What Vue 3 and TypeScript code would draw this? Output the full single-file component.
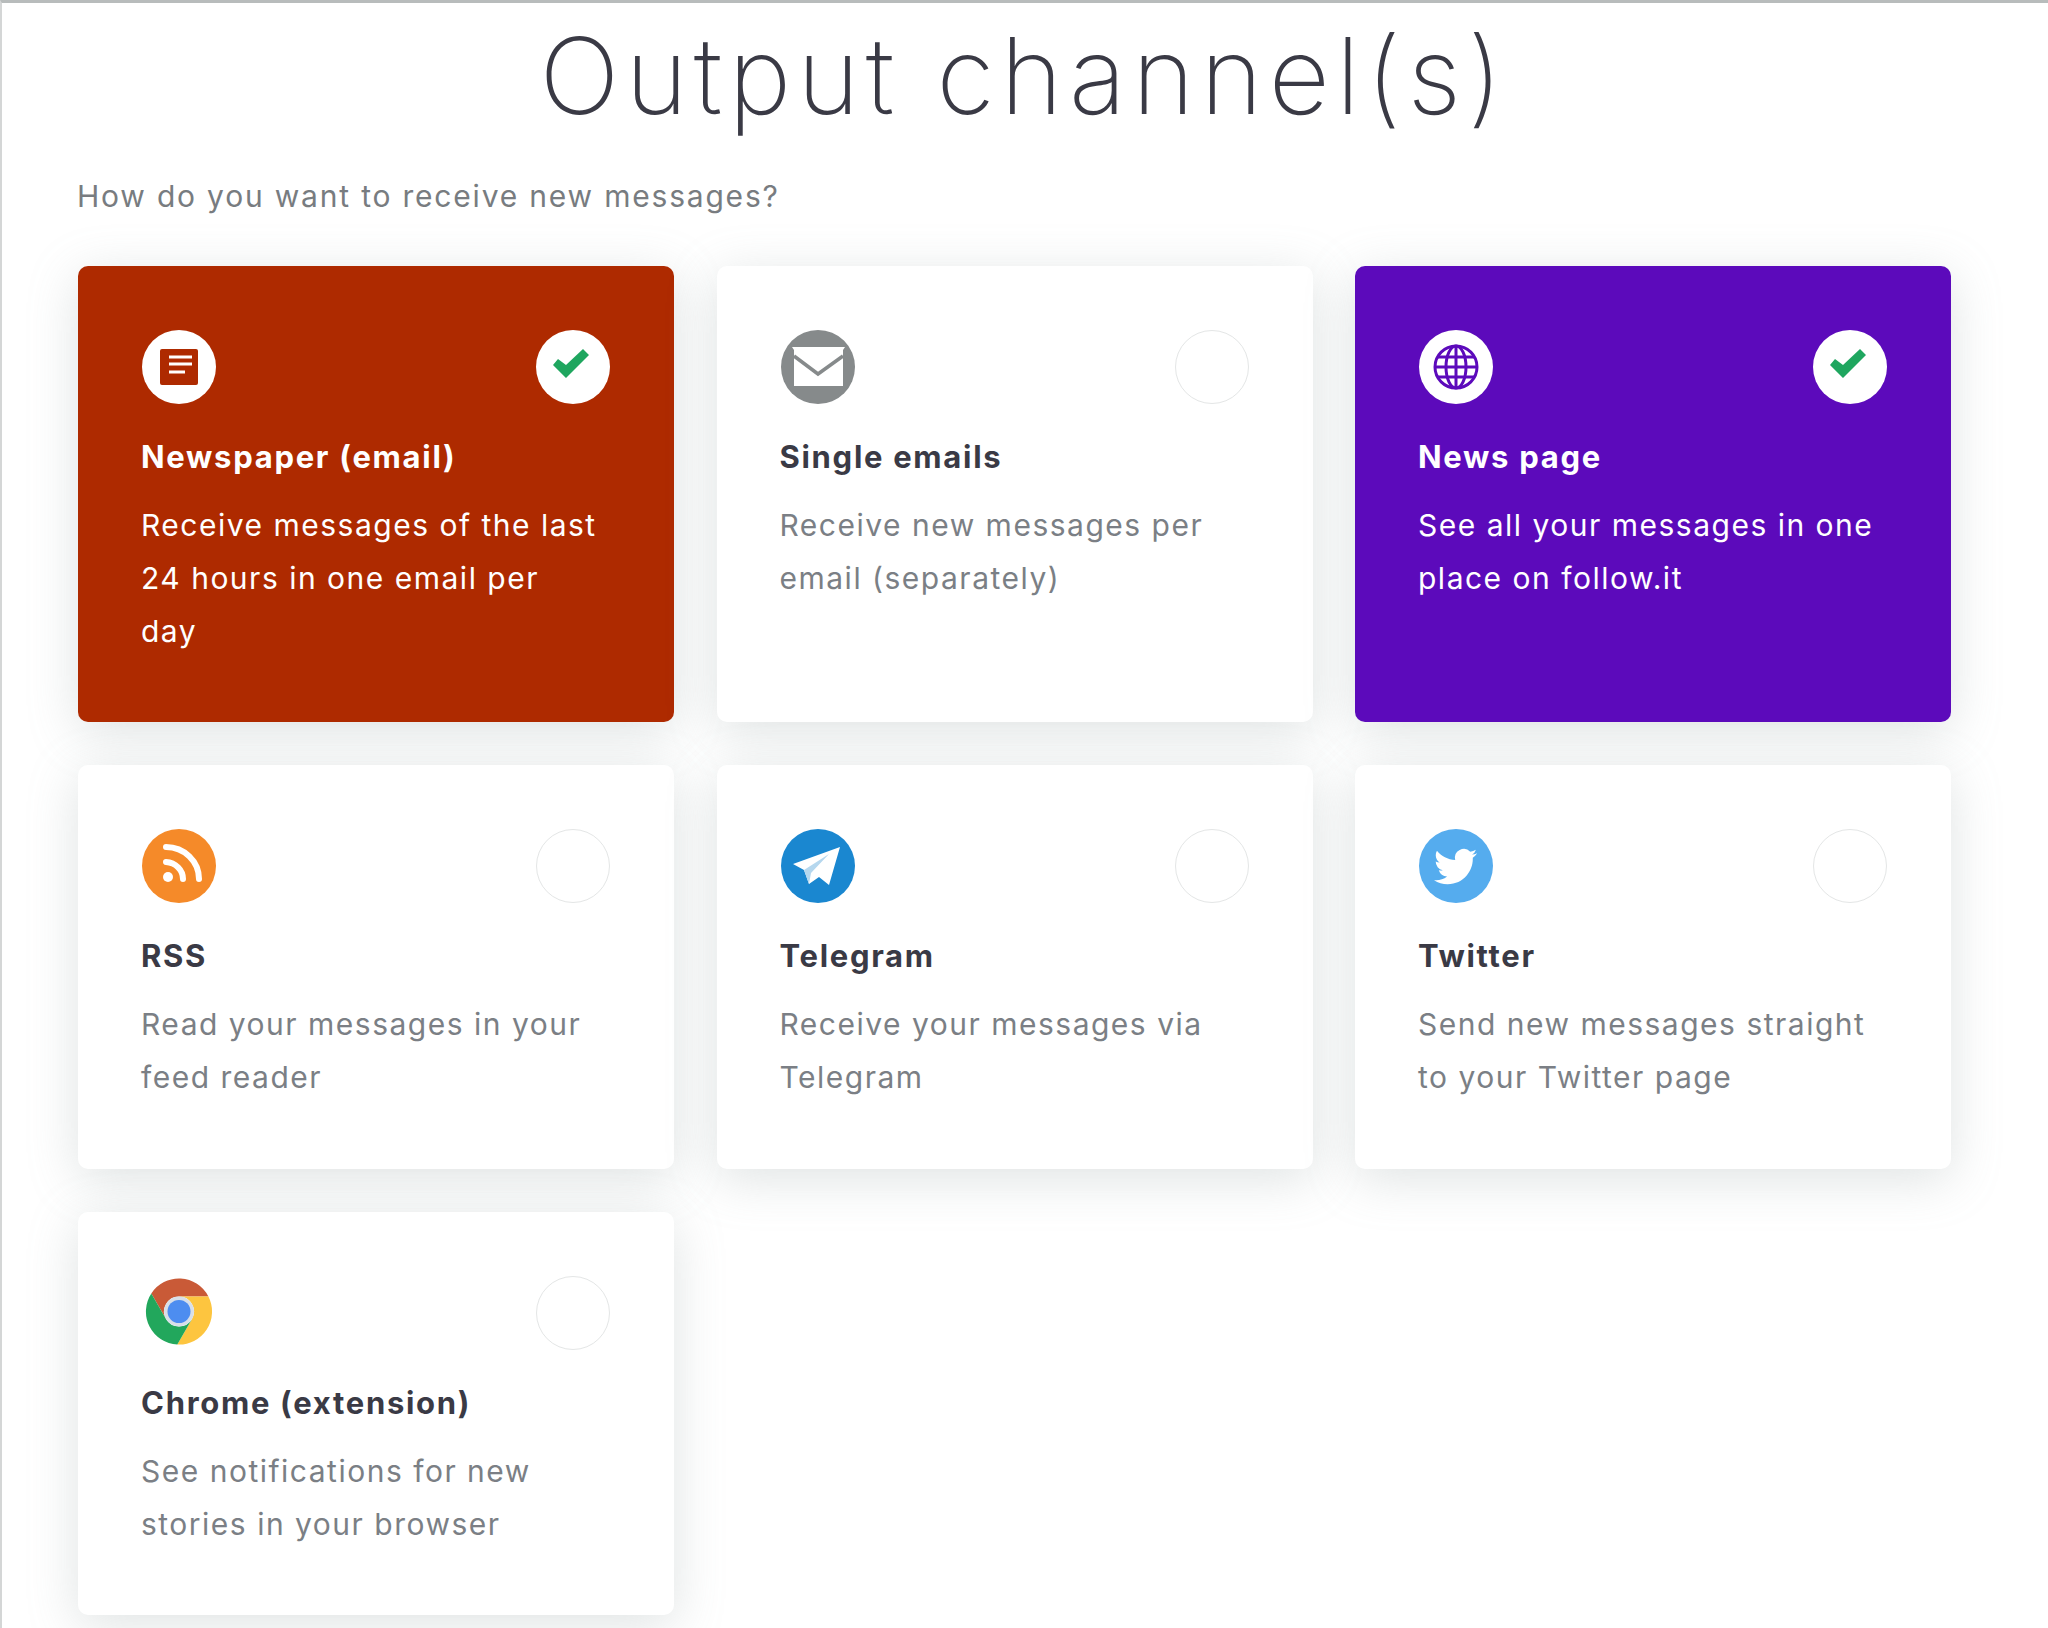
<script setup lang="ts">
interface Channel {
  key: string;
  title: string;
  text: string;
  selected?: string;
}
const channels: Channel[] = [
  { key: 'news', title: 'Newspaper (email)', text: 'Receive messages of the last 24 hours in one email per day', selected: 'red' },
  { key: 'mail', title: 'Single emails', text: 'Receive new messages per email (separately)' },
  { key: 'page', title: 'News page', text: 'See all your messages in one place on follow.it', selected: 'purple' },
  { key: 'rss', title: 'RSS', text: 'Read your messages in your feed reader' },
  { key: 'telegram', title: 'Telegram', text: 'Receive your messages via Telegram' },
  { key: 'twitter', title: 'Twitter', text: 'Send new messages straight to your Twitter page' },
  { key: 'chrome', title: 'Chrome (extension)', text: 'See notifications for new stories in your browser' },
];
</script>

<template>
  <div class="page">
    <h1 class="title">Output channel(s)</h1>
    <p class="lead">How do you want to receive new messages?</p>
    <div class="grid">
      <div v-for="c in channels" :key="c.key" class="card" :class="c.selected">
        <div class="top">
          <svg class="ico" viewBox="0 0 74 74" width="74" height="74">
            <template v-if="c.key === 'news'">
              <circle cx="37" cy="37" r="37" fill="#fff" />
              <rect x="18" y="19" width="38" height="36" rx="2" fill="#ae2a00" />
              <path d="M27 27H50M27 34H50M27 42H43" stroke="#fff" stroke-width="3" fill="none" />
            </template>
            <template v-else-if="c.key === 'mail'">
              <circle cx="37" cy="37" r="37" fill="#868a8b" />
              <path d="M11 17H64L62 20V56H13V20Z" fill="#fff" />
              <path d="M13 26L37 44L62 26" stroke="#868a8b" stroke-width="3.5" fill="none" />
            </template>
            <template v-else-if="c.key === 'page'">
              <circle cx="37" cy="37" r="37" fill="#fff" />
              <g fill="none" stroke="#5c0abb" stroke-width="3">
                <circle cx="37" cy="37" r="21" />
                <ellipse cx="37" cy="37" rx="10" ry="21" />
                <path d="M37 16V58M16 37H58M19 27H55M19 47H55" />
              </g>
            </template>
            <template v-else-if="c.key === 'rss'">
              <circle cx="37" cy="37" r="37" fill="#f58a29" />
              <circle cx="26" cy="48" r="5" fill="#fff" />
              <path d="M24 33A18 17 0 0 1 41 50M24 18A33 32 0 0 1 57 50" stroke="#fff" stroke-width="6" stroke-linecap="round" fill="none" />
            </template>
            <template v-else-if="c.key === 'telegram'">
              <circle cx="37" cy="37" r="37" fill="#1a87d0" />
              <path d="M59 18L12 35L23 41L28 55L38 48L48 56Z" fill="#fff" />
              <path d="M23 41L48 25L30 44L28 55Z" fill="#b5d7ee" />
            </template>
            <template v-else-if="c.key === 'twitter'">
              <circle cx="37" cy="37" r="37" fill="#55acee" />
              <path transform="translate(15 16) scale(1.8)" fill="#fff" d="M23.953 4.57a10 10 0 01-2.825.775 4.958 4.958 0 002.163-2.723c-.951.555-2.005.959-3.127 1.184a4.92 4.92 0 00-8.384 4.482C7.69 8.095 4.067 6.13 1.64 3.162a4.822 4.822 0 00-.666 2.475c0 1.71.87 3.213 2.188 4.096a4.904 4.904 0 01-2.228-.616v.06a4.923 4.923 0 003.946 4.827 4.996 4.996 0 01-2.212.085 4.936 4.936 0 004.604 3.417 9.867 9.867 0 01-6.102 2.105c-.39 0-.779-.023-1.17-.067a13.995 13.995 0 007.557 2.209c9.053 0 13.998-7.496 13.998-13.985 0-.21 0-.42-.015-.63A9.935 9.935 0 0024 4.59z" />
            </template>
            <g v-else transform="translate(37 35.5)">
              <path d="M0 -15L29.4 -15A33 33 0 0 0 -27.7 -18L-13 7.5A15 15 0 0 1 0 -15Z" fill="#c95a37" />
              <path d="M13 7.5L-1.7 33A33 33 0 0 0 29.4 -15L0 -15A15 15 0 0 1 13 7.5Z" fill="#fdc53f" />
              <path d="M-13 7.5L-27.7 -18A33 33 0 0 0 -1.7 33L13 7.5A15 15 0 0 1 -13 7.5Z" fill="#22a75c" />
              <circle r="15" fill="#d8dfe8" />
              <circle r="11.5" fill="#4d8df0" />
            </g>
          </svg>
          <div class="radio" :class="{ on: c.selected }">
            <svg v-if="c.selected" viewBox="0 0 74 74" width="74" height="74">
              <path d="M17 35L30 48L53 25L47 19L30 35L22 29Z" fill="#1fa65f" />
            </svg>
          </div>
        </div>
        <h2 class="name">{{ c.title }}</h2>
        <p class="desc">{{ c.text }}</p>
      </div>
    </div>
  </div>
</template>

<style scoped>
.page {
  box-sizing: border-box;
  height: 1628px;
  overflow: hidden;
  background: #fff;
  border-top: 3px solid #b8bcbc;
  border-left: 2px solid #d4d6d6;
  font-family: Inter, "Noto Sans", sans-serif;
}
.title {
  margin: 0;
  padding-right: 2px;
  text-align: center;
  font-size: 106px;
  line-height: 146px;
  font-weight: 250;
  color: #3a3a45;
  letter-spacing: 6.2px;
}
.lead {
  margin: 16px 0 0 75px;
  font-size: 30px;
  line-height: 62px;
  color: #787c80;
  letter-spacing: 1.8px;
}
.grid {
  display: grid;
  grid-template-columns: repeat(3, 596px);
  column-gap: 42.5px;
  row-gap: 43px;
  margin: 38.5px 0 0 76px;
}
.card {
  box-sizing: border-box;
  padding: 64px 64px 64px 63px;
  border-radius: 10px;
  background: #fff;
  box-shadow: 0 10px 50px rgba(140, 155, 155, 0.28);
  color: #7b7f85;
}
.card.red {
  background: #ae2a00;
  color: #fff;
}
.card.purple {
  background: #5c0abb;
  color: #fff;
}
.top {
  display: flex;
  justify-content: space-between;
}
.ico {
  display: block;
  margin-left: 1px;
}
.radio {
  box-sizing: border-box;
  width: 74px;
  height: 74px;
  border-radius: 50%;
  border: 1px solid #e4e6e6;
}
.radio.on {
  border: 0;
  background: #fff;
}
.radio svg {
  display: block;
}
.name {
  margin: 33px 0 0;
  font-size: 31px;
  line-height: 40px;
  font-weight: 700;
  letter-spacing: 1.7px;
  color: #3a3a45;
}
.red .name,
.purple .name {
  color: #fff;
}
.desc {
  margin: 22px 6px 0 0;
  font-size: 30px;
  line-height: 53.2px;
  font-weight: 400;
  letter-spacing: 1.5px;
}
</style>
